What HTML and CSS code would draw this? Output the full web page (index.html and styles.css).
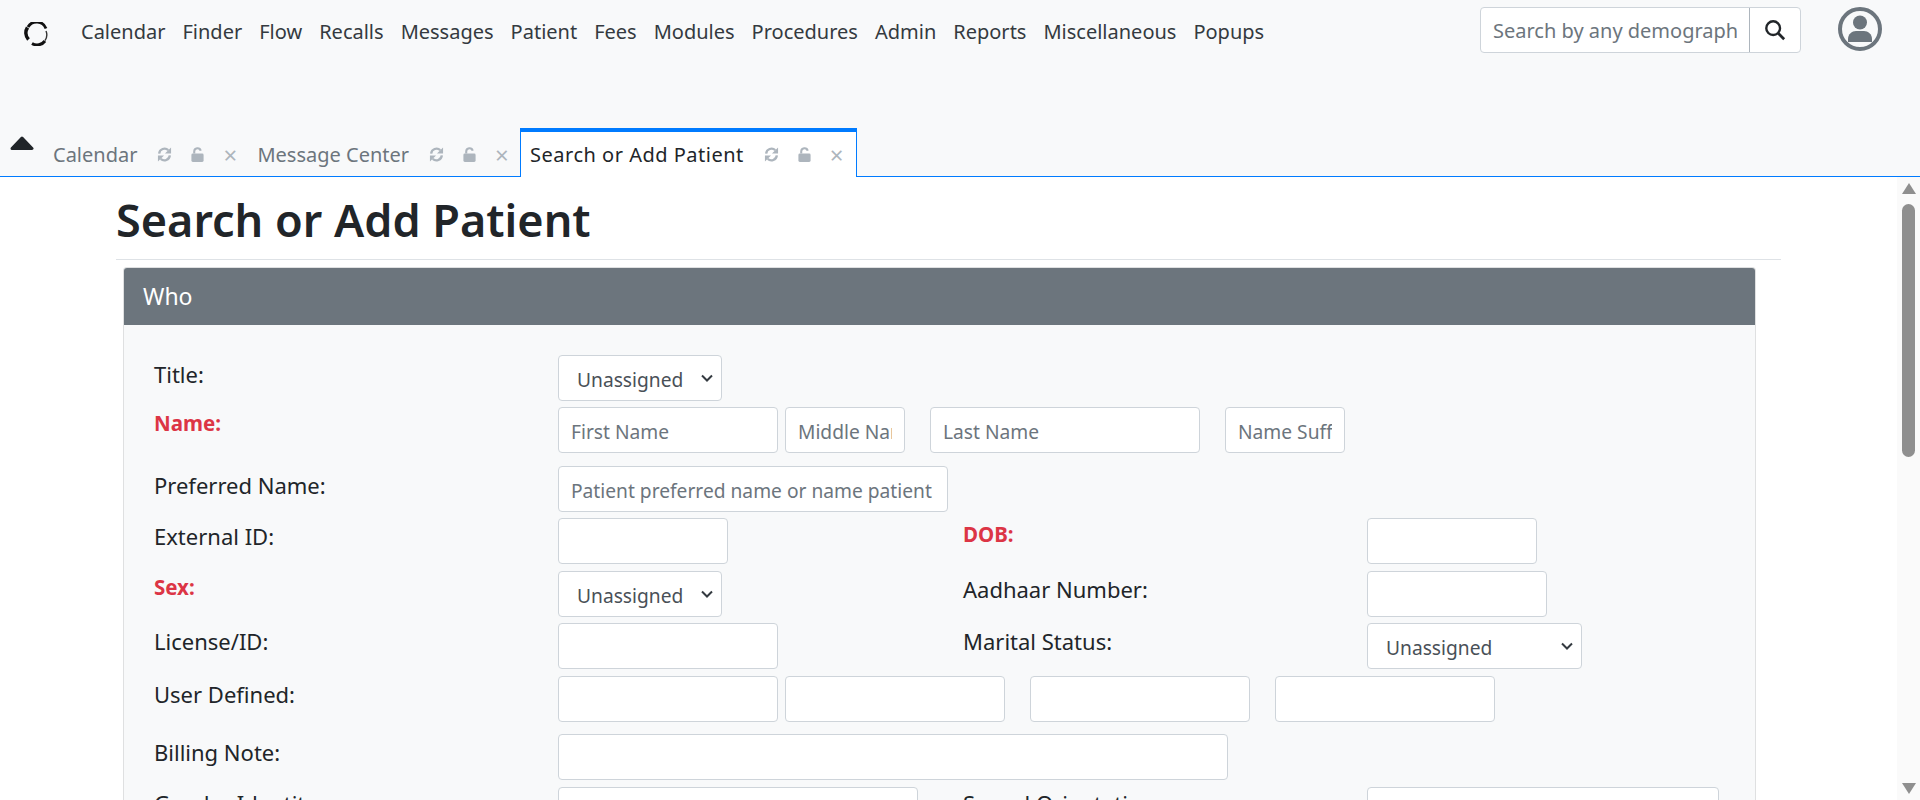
FILE: index.html
```html
<!DOCTYPE html>
<html lang="en">
<head>
  <meta charset="UTF-8" />
  <title>Search or Add Patient</title>
  <link rel="stylesheet" href="styles.css">
</head>
<body>

  <nav class="topbar">
    <svg class="logo" viewBox="0 0 24 24" width="24" height="24">
      <path d="M4 5 A10 10 0 0 1 22 6.5" fill="none" stroke="#111" stroke-width="2.8" />
      <path d="M3.5 5.5 A10 10 0 0 0 4.5 17.5" fill="none" stroke="#111" stroke-width="3.6" />
      <path d="M8 21.5 A10 10 0 0 0 21 19" fill="none" stroke="#111" stroke-width="3" />
      <path d="M22 9 A10 10 0 0 1 21 18.5" fill="none" stroke="#333" stroke-width="1.4" />
    </svg>
    <ul class="menu">
      <li>Calendar</li>
      <li>Finder</li>
      <li>Flow</li>
      <li>Recalls</li>
      <li>Messages</li>
      <li>Patient</li>
      <li>Fees</li>
      <li>Modules</li>
      <li>Procedures</li>
      <li>Admin</li>
      <li>Reports</li>
      <li>Miscellaneous</li>
      <li>Popups</li>
    </ul>
    <div class="search">
      <input type="text" placeholder="Search by any demographics">
      <button type="button">
        <svg viewBox="0 0 24 24" width="22" height="22"><circle cx="10" cy="10" r="7.5" fill="none" stroke="#212529" stroke-width="2.6" /><path d="M15.5 15.5 L22 22" stroke="#212529" stroke-width="3" /></svg>
      </button>
    </div>
    <svg class="avatar" viewBox="0 0 44 44" width="44" height="44">
      <circle cx="22" cy="22" r="20" fill="none" stroke="#6c757d" stroke-width="4" />
      <circle cx="22" cy="15.5" r="7" fill="#6c757d" />
      <path d="M10 35 V32 C10 27 14 24 18 24 H26 C30 24 34 27 34 32 V35 Z" fill="#6c757d" />
    </svg>
  </nav>

  <div class="tabbar">
    <svg class="collapse-caret" viewBox="0 0 24 15" width="24" height="15"><path d="M12 2 L22 12.5 H2 Z" fill="#212529" stroke="#212529" stroke-width="3" stroke-linejoin="round" /></svg>
    <div class="tab">
      <span>Calendar</span>
      <svg class="ico" viewBox="0 0 16 16"><path d="M2.3 7 A5.8 5.8 0 0 1 12 3.3 M13.7 9 A5.8 5.8 0 0 1 4 12.7" fill="none" stroke="#adb5bd" stroke-width="2.5" /><path d="M15 .5 V7 H8.5 Z M1 15.5 V9 H7.5 Z" fill="#adb5bd" /></svg>
      <svg class="ico" viewBox="0 0 16 16"><path d="M4.5 7 V4.8 A3.5 3.5 0 0 1 11.4 4" fill="none" stroke="#adb5bd" stroke-width="2.2" /><rect x="1.5" y="7" width="13" height="9" rx="1.5" fill="#adb5bd" /></svg>
      <span class="close">×</span>
    </div>
    <div class="tab">
      <span>Message Center</span>
      <svg class="ico" viewBox="0 0 16 16"><path d="M2.3 7 A5.8 5.8 0 0 1 12 3.3 M13.7 9 A5.8 5.8 0 0 1 4 12.7" fill="none" stroke="#adb5bd" stroke-width="2.5" /><path d="M15 .5 V7 H8.5 Z M1 15.5 V9 H7.5 Z" fill="#adb5bd" /></svg>
      <svg class="ico" viewBox="0 0 16 16"><path d="M4.5 7 V4.8 A3.5 3.5 0 0 1 11.4 4" fill="none" stroke="#adb5bd" stroke-width="2.2" /><rect x="1.5" y="7" width="13" height="9" rx="1.5" fill="#adb5bd" /></svg>
      <span class="close">×</span>
    </div>
    <div class="tab active">
      <span>Search or Add Patient</span>
      <svg class="ico" viewBox="0 0 16 16"><path d="M2.3 7 A5.8 5.8 0 0 1 12 3.3 M13.7 9 A5.8 5.8 0 0 1 4 12.7" fill="none" stroke="#adb5bd" stroke-width="2.5" /><path d="M15 .5 V7 H8.5 Z M1 15.5 V9 H7.5 Z" fill="#adb5bd" /></svg>
      <svg class="ico" viewBox="0 0 16 16"><path d="M4.5 7 V4.8 A3.5 3.5 0 0 1 11.4 4" fill="none" stroke="#adb5bd" stroke-width="2.2" /><rect x="1.5" y="7" width="13" height="9" rx="1.5" fill="#adb5bd" /></svg>
      <span class="close">×</span>
    </div>
  </div>

  <div class="pane">
    <main class="content">
      <h1>Search or Add Patient</h1>
      <hr>
      <section class="card">
        <h2 class="card-head">Who</h2>
        <div class="card-body">

          <div class="row row-title">
            <label class="lbl">Title:</label>
            <div class="fields"><select class="ctl w164"><option>Unassigned</option></select></div>
          </div>

          <div class="row row-name">
            <label class="lbl req">Name:</label>
            <div class="fields">
              <input class="ctl w220" placeholder="First Name">
              <input class="ctl w120 gap8" placeholder="Middle Name">
              <input class="ctl w270 gap25" placeholder="Last Name">
              <input class="ctl w120 gap25" placeholder="Name Suffix">
            </div>
          </div>

          <div class="row row-pref">
            <label class="lbl">Preferred Name:</label>
            <div class="fields"><input class="ctl w390" placeholder="Patient preferred name or name patient goes by"></div>
          </div>

          <div class="row row-ext">
            <label class="lbl">External ID:</label>
            <div class="fields half"><input class="ctl w170"></div>
            <label class="lbl req">DOB:</label>
            <div class="fields"><input class="ctl w170"></div>
          </div>

          <div class="row row-sex">
            <label class="lbl req">Sex:</label>
            <div class="fields half"><select class="ctl w164"><option>Unassigned</option></select></div>
            <label class="lbl">Aadhaar Number:</label>
            <div class="fields"><input class="ctl w180"></div>
          </div>

          <div class="row row-lic">
            <label class="lbl">License/ID:</label>
            <div class="fields half"><input class="ctl w220"></div>
            <label class="lbl">Marital Status:</label>
            <div class="fields"><select class="ctl w215"><option>Unassigned</option></select></div>
          </div>

          <div class="row row-user">
            <label class="lbl">User Defined:</label>
            <div class="fields">
              <input class="ctl w220">
              <input class="ctl w220 gap8">
              <input class="ctl w220 gap25">
              <input class="ctl w220 gap25">
            </div>
          </div>

          <div class="row row-bill">
            <label class="lbl">Billing Note:</label>
            <div class="fields"><input class="ctl w670"></div>
          </div>

          <div class="row row-gender">
            <label class="lbl">Gender Identity:</label>
            <div class="fields half"><input class="ctl w360"></div>
            <label class="lbl">Sexual Orientation:</label>
            <div class="fields"><input class="ctl w352"></div>
          </div>

        </div>
      </section>
    </main>

    <div class="scrollbar">
      <span class="arrow up"></span>
      <span class="thumb"></span>
      <span class="arrow down"></span>
    </div>
  </div>

</body>
</html>
```

FILE: styles.css
```css
* {
  box-sizing: border-box;
}

html, body {
  height: 800px;
  margin: 0;
  overflow: hidden;
}

body {
  font-family: 'Noto Sans', 'Open Sans', sans-serif;
  font-size: 20px;
  color: #212529;
  background-color: #fff;
  display: flex;
  flex-direction: column;
}

/* top navigation */
.topbar {
  height: 128px;
  flex: none;
  background-color: #f8f9fa;
  display: flex;
  align-items: flex-start;
}

.logo {
  margin: 22px 0 0 24px;
  flex: none;
}

.menu {
  list-style: none;
  margin: 0 0 0 33px;
  padding: 19px 0 0;
  display: flex;
  gap: 17px;
  color: #343a40;
  line-height: 26px;
}

.search {
  margin: 7px 0 0 auto;
  width: 321px;
  height: 46px;
  display: flex;
  background-color: #fff;
  border: 1px solid #ced4da;
  border-radius: 4px;
}

.search input {
  width: 268px;
  border: none;
  background: none;
  padding: 0 12px;
  font: inherit;
  outline: none;
}

.search input::placeholder {
  color: #6c757d;
}

.search button {
  flex: 1;
  background: none;
  border: none;
  border-left: 1px solid #adb5bd;
  padding: 0;
  display: flex;
  align-items: center;
  justify-content: center;
}

.avatar {
  margin: 7px 38px 0 37px;
  flex: none;
}

/* tabs */
.tabbar {
  height: 49px;
  flex: none;
  background-color: #f8f9fa;
  border-bottom: 1px solid #007bff;
  display: flex;
}

.collapse-caret {
  margin: 8px 0 0 10px;
  flex: none;
}

.tab {
  display: flex;
  align-items: center;
  padding: 4px 12px 0 11px;
  height: 49px;
  color: #6c757d;
}

.tab:first-of-type {
  margin-left: 8px;
}

.tab span:first-child {
  margin-right: 20px;
}

.tab .ico {
  width: 15px;
  height: 15px;
  margin-right: 18px;
  flex: none;
}

.tab .close {
  color: #adb5bd;
  font-size: 24px;
  line-height: 1;
  width: 11px;
  text-align: center;
}

.tab.active {
  margin-left: 2px;
  background-color: #fff;
  color: #212529;
  letter-spacing: 0.5px;
  border: 1px solid #007bff;
  border-top-width: 4px;
  border-bottom: none;
  padding: 0 15px 0 9px;
}

/* main pane */
.pane {
  flex: 1;
  min-height: 0;
  display: flex;
}

.content {
  flex: 1;
  min-width: 0;
  overflow: hidden;
  padding: 0 116px;
}

h1 {
  font-size: 45px;
  font-weight: 600;
  line-height: 48px;
  margin: 19px 0 0;
}

hr {
  border: none;
  border-top: 1px solid #dee2e6;
  margin: 15px 0 0;
}

.card {
  margin: 7px 25px 0 7px;
  border: 1px solid #dfe0e1;
  border-bottom: none;
  border-radius: 4px 4px 0 0;
  background-color: #f8f9fa;
}

.card-head {
  margin: 0;
  height: 57px;
  padding: 0 19px;
  background-color: #6c757d;
  color: #fff;
  font-size: 23px;
  font-weight: 400;
  line-height: 57px;
  border-radius: 3px 3px 0 0;
}

.card-body {
  padding: 30px 0 0 30px;
}

.row {
  display: flex;
  align-items: flex-start;
}

.lbl {
  width: 404px;
  flex: none;
  font-size: 22px;
  line-height: 26px;
}

.req {
  color: #dc3545;
  font-weight: 700;
  font-size: 20.5px;
}

.fields {
  display: flex;
}

.half {
  width: 405px;
  flex: none;
}

.ctl {
  height: 46px;
  font: inherit;
  font-size: 19.2px;
  color: #495057;
  background-color: #fff;
  border: 1px solid #ced4da;
  border-radius: 4px;
  padding: 2px 12px 0;
  outline: none;
}

.ctl::placeholder {
  color: #6c757d;
}

select.ctl {
  appearance: none;
  padding: 2px 0 0 18px;
  background-image: url("data:image/svg+xml,%3Csvg xmlns='http://www.w3.org/2000/svg' viewBox='0 0 12 8'%3E%3Cpath d='M1 1.5 L6 6.5 L11 1.5' fill='none' stroke='%23343a40' stroke-width='2'/%3E%3C/svg%3E");
  background-repeat: no-repeat;
  background-position: right 8px center;
  background-size: 12px 8px;
}

.w120 { width: 120px; }
.w164 { width: 164px; }
.w170 { width: 170px; }
.w180 { width: 180px; }
.w215 { width: 215px; }
.w220 { width: 220px; }
.w270 { width: 270px; }
.w352 { width: 352px; }
.w360 { width: 360px; }
.w390 { width: 390px; }
.w670 { width: 670px; }

.gap8 { margin-left: 7px; }
.gap25 { margin-left: 25px; }

.row-title { height: 52px; }
.row-title .lbl { margin-top: 6px; }
.row-name { height: 59px; }
.row-name .lbl { margin-top: 3px; }
.row-pref { height: 52px; }
.row-pref .lbl { margin-top: 6px; }
.row-ext { height: 53px; }
.row-ext .lbl { margin-top: 5px; }
.row-ext .req { margin-top: 3px; }
.row-sex { height: 52px; }
.row-sex .lbl { margin-top: 5px; }
.row-sex .req { margin-top: 3px; }
.row-lic { height: 53px; }
.row-lic .lbl { margin-top: 5px; }
.row-user { height: 58px; }
.row-user .lbl { margin-top: 5px; }
.row-bill { height: 53px; }
.row-bill .lbl { margin-top: 5px; }
.row-gender .lbl { margin-top: 3px; }

/* scrollbar drawn as part of the pane */
.scrollbar {
  width: 23px;
  flex: none;
  background-color: #fafafa;
  display: flex;
  flex-direction: column;
  align-items: center;
  padding-top: 6px;
}

.thumb {
  width: 13px;
  height: 253px;
  margin-top: 10px;
  background-color: #8f8f8f;
  border-radius: 7px;
}

.arrow {
  width: 0;
  height: 0;
  border-left: 7px solid transparent;
  border-right: 7px solid transparent;
}

.arrow.up {
  border-bottom: 11px solid #8f8f8f;
}

.arrow.down {
  margin-top: auto;
  margin-bottom: 6px;
  border-top: 11px solid #8f8f8f;
}
```
